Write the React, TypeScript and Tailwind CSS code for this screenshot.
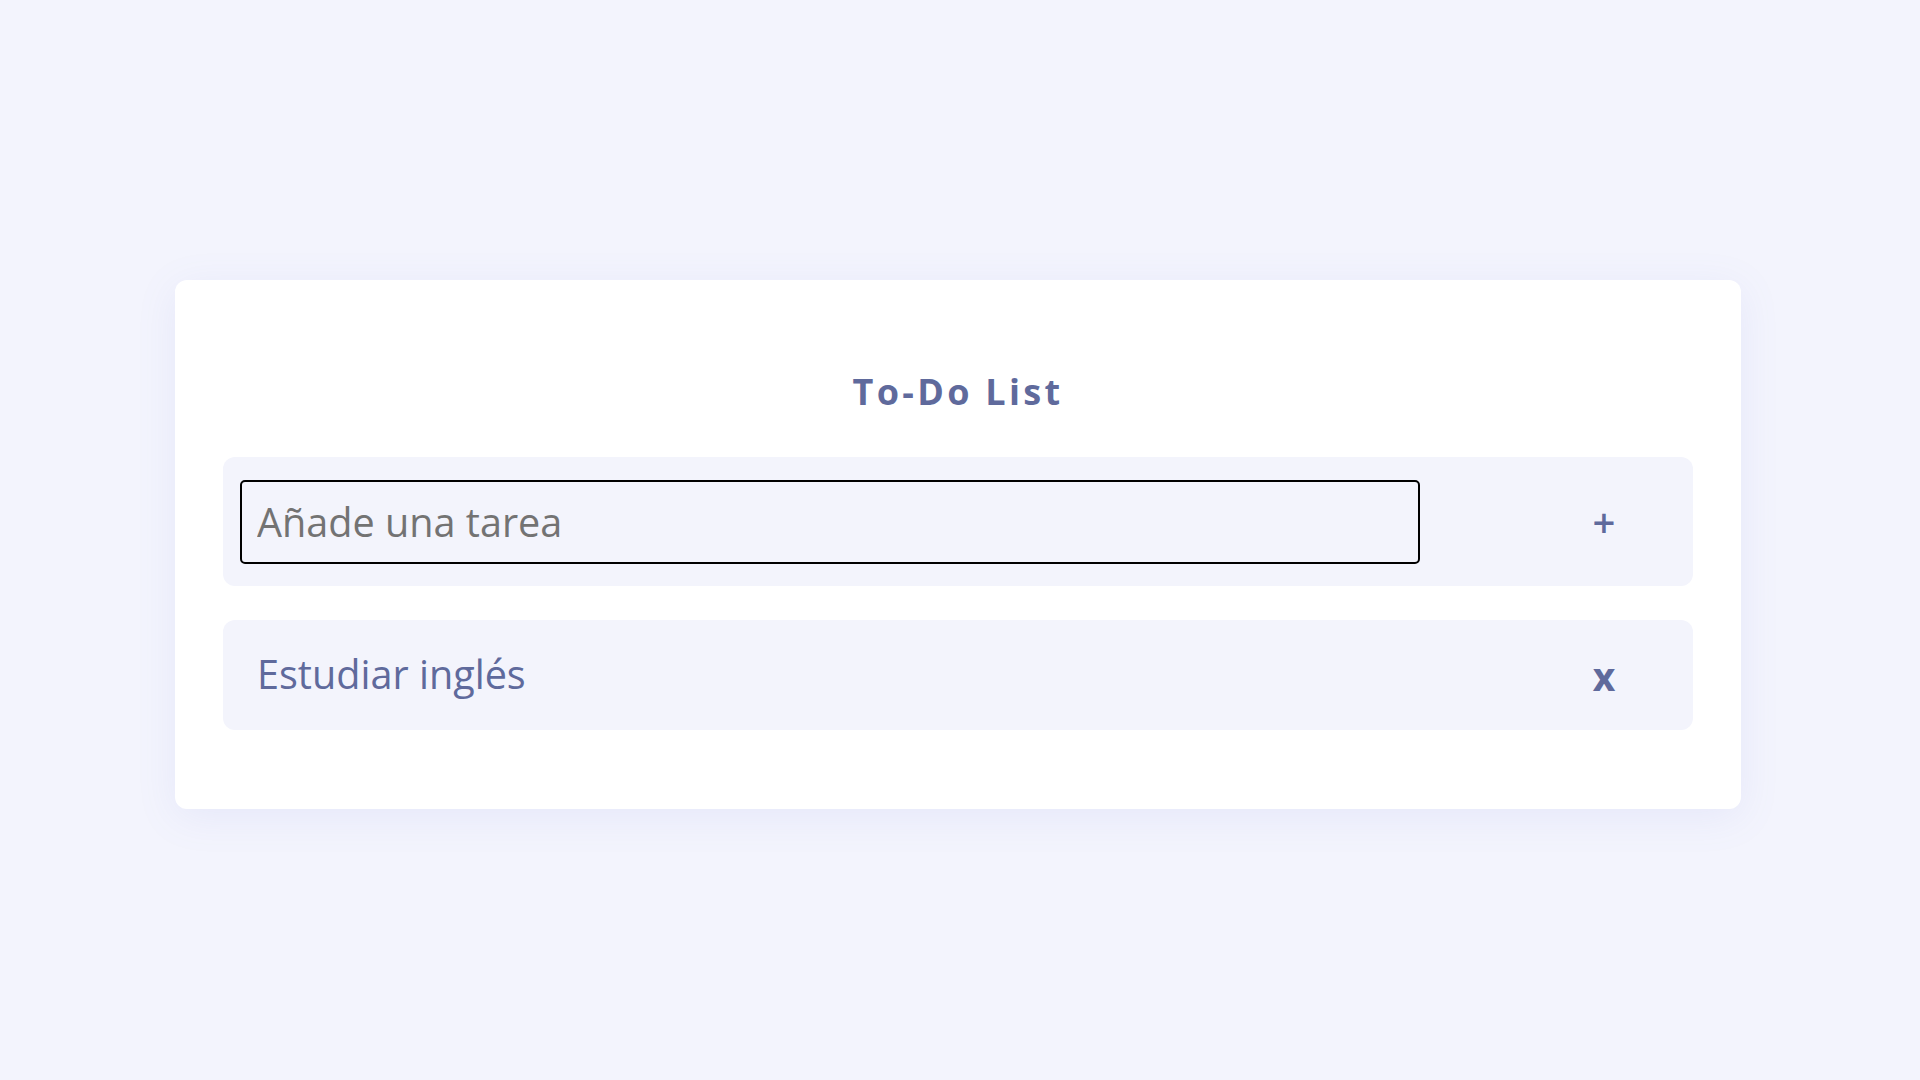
import React, { useState } from "react";

export default function App() {
  const [value, setValue] = useState("");
  const [tasks, setTasks] = useState<string[]>(["Estudiar inglés"]);

  const add = () => {
    if (!value.trim()) return;
    setTasks([...tasks, value.trim()]);
    setValue("");
  };

  return (
    <div
      className="min-h-screen w-full bg-[#f3f4fd] pt-[280px]"
      style={{ fontFamily: '"Open Sans", "Noto Sans", sans-serif' }}
    >
      <div className="ml-[175px] w-[1566px] rounded-[12px] bg-white px-12 pt-[87px] pb-[79px] shadow-[0_8px_40px_rgba(120,130,220,0.10)]">
        <h1 className="h-[50px] text-center text-[36px] leading-[50px] font-bold tracking-[3.3px] text-[#5f6a9c]">
          To-Do List
        </h1>
        <div className="mt-[40px] flex h-[129px] items-center justify-between rounded-[12px] bg-[#f3f4fc] pr-[49px] pl-[17px]">
          <input
            value={value}
            onChange={(e) => setValue(e.target.value)}
            onKeyDown={(e) => e.key === "Enter" && add()}
            placeholder="Añade una tarea"
            className="h-[84px] w-[1180px] rounded-[5px] border-2 border-black bg-transparent px-[15px] text-[39.6px] text-[#5f6a9c] outline-none placeholder:text-[#737373]"
          />
          <button
            onClick={add}
            className="flex h-[60px] w-[80px] items-center justify-center text-[40px] leading-none font-semibold text-[#5f6a9c]"
          >
            +
          </button>
        </div>
        <div className="mt-[34px] flex flex-col gap-[34px]">
          {tasks.map((t, i) => (
            <div
              key={i}
              className="flex h-[110px] items-center justify-between rounded-[12px] bg-[#f3f4fc] pr-[49px] pl-[34px]"
            >
              <span className="text-[39.6px] text-[#5f6a9c]">{t}</span>
              <button
                onClick={() => setTasks(tasks.filter((_, j) => j !== i))}
                className="flex h-[60px] w-[80px] items-center justify-center text-[39px] leading-none font-bold text-[#5f6a9c]"
              >
                x
              </button>
            </div>
          ))}
        </div>
      </div>
    </div>
  );
}
